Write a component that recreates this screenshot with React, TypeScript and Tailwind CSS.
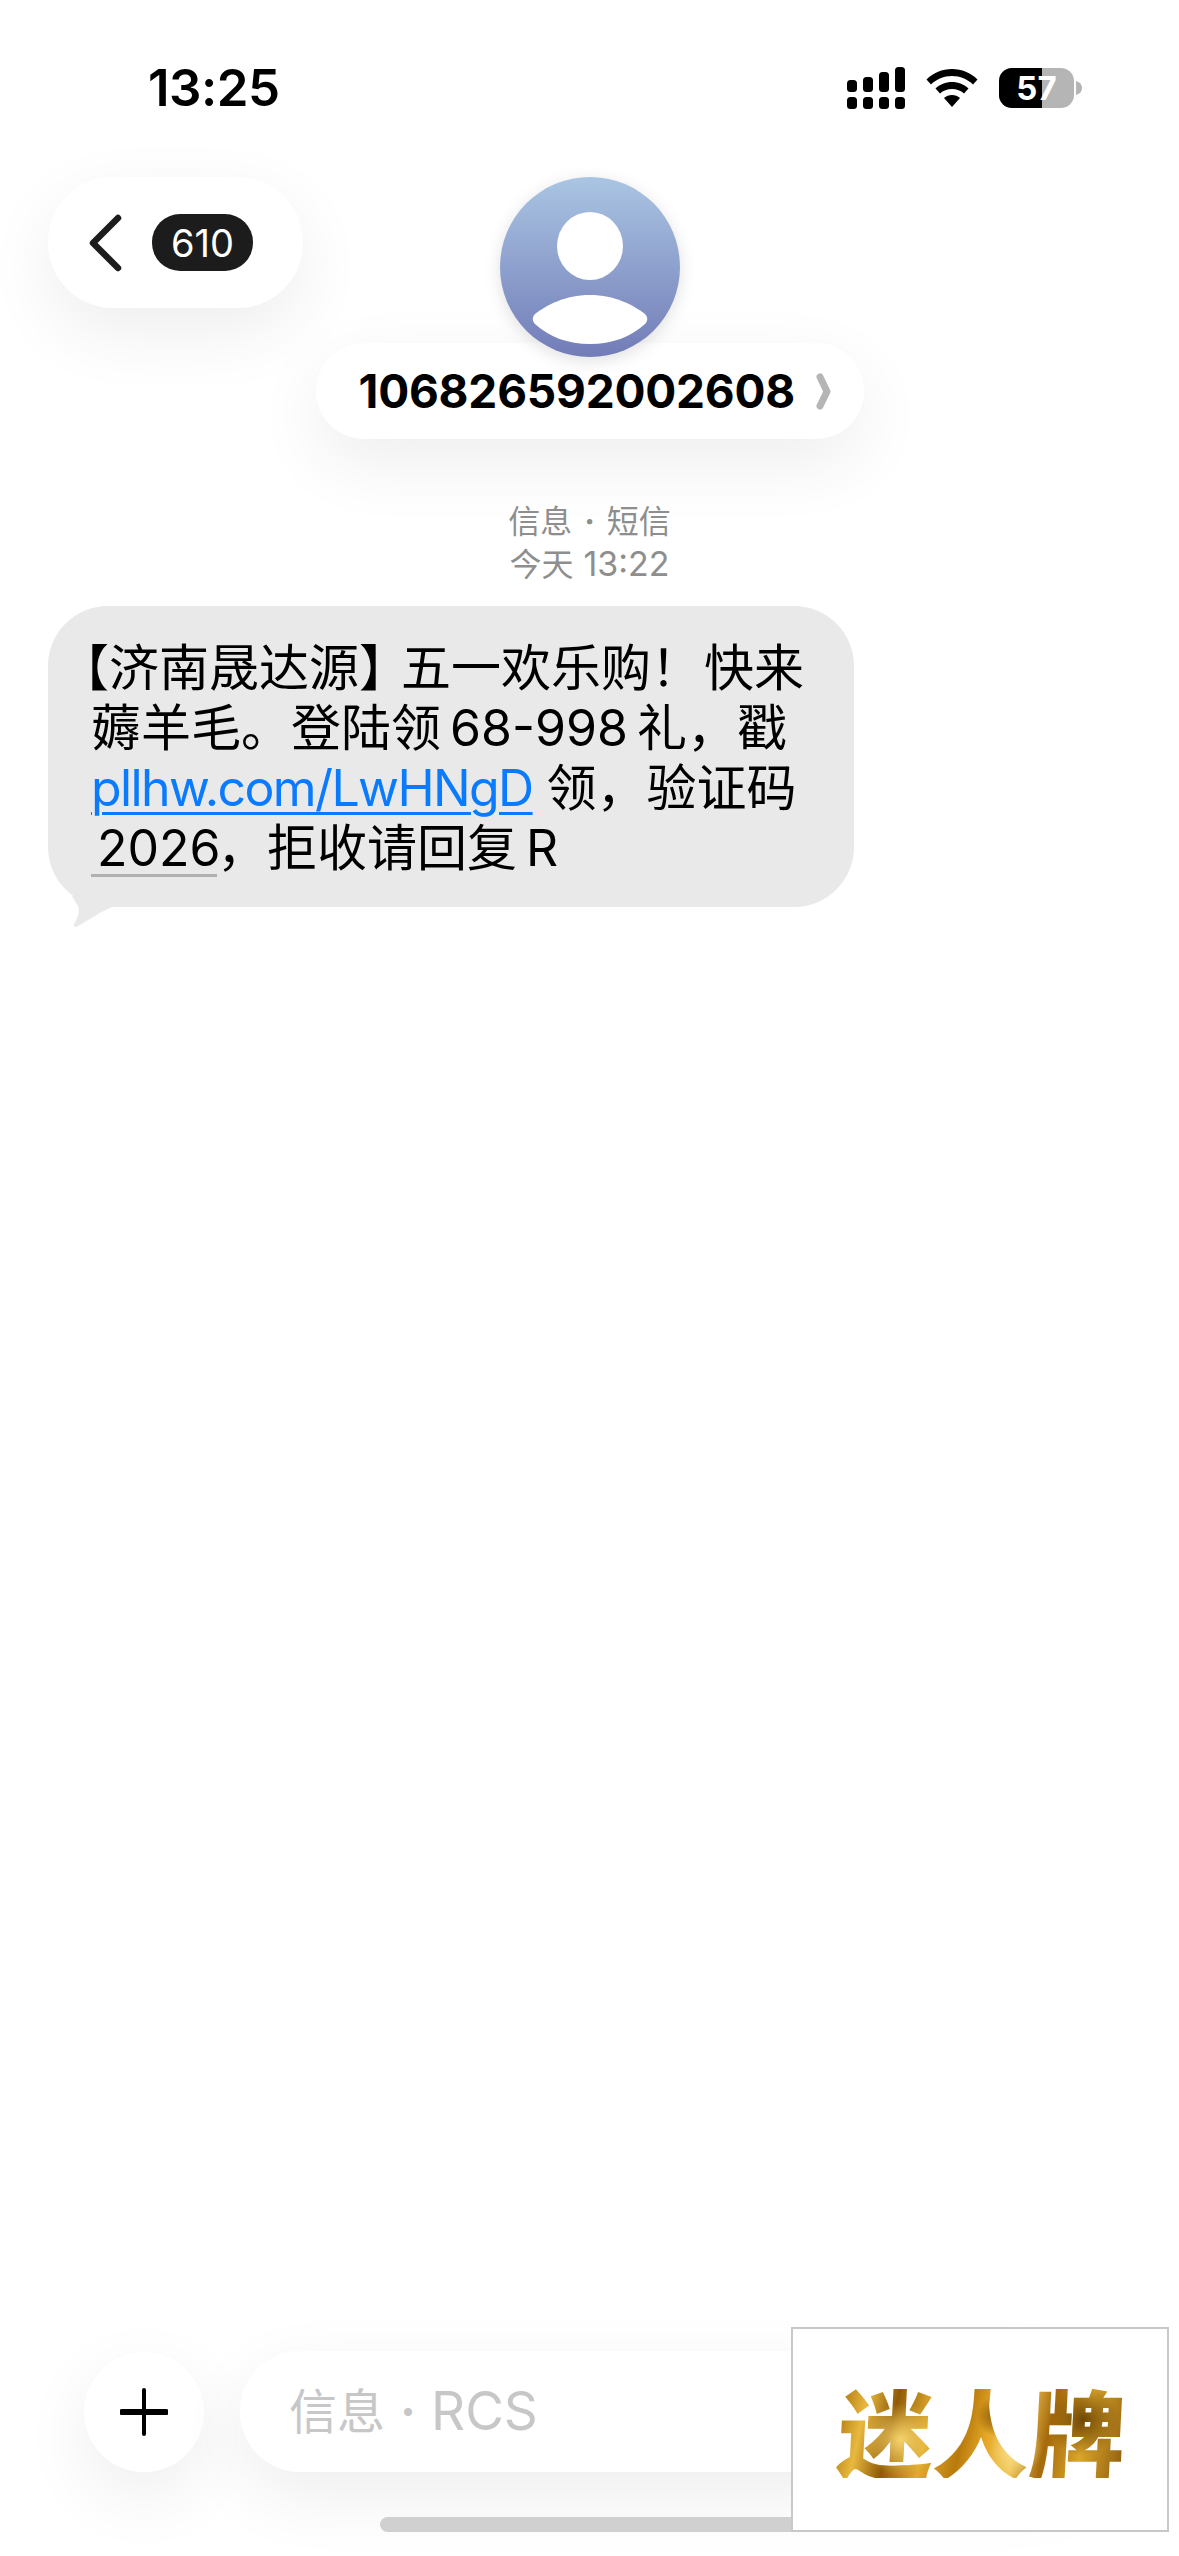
const sans = 'font-["Inter","Noto_Sans_CJK_SC",sans-serif]';

const SignalIcon = () => (
  <svg width="58" height="42" viewBox="0 0 58 42" fill="#000">
    <rect x="0" y="13" width="10" height="12" rx="3.500" />
    <rect x="16" y="10" width="10" height="15" rx="3.500" />
    <rect x="32" y="5" width="10" height="20" rx="3.500" />
    <rect x="48" y="0" width="10" height="25" rx="3.500" />
    <rect x="0" y="30" width="10" height="12" rx="3.500" />
    <rect x="16" y="30" width="10" height="12" rx="3.500" />
    <rect x="32" y="30" width="10" height="12" rx="3.500" />
    <rect x="48" y="30" width="10" height="12" rx="3.500" />
  </svg>
);

const WifiIcon = () => (
  <svg width="52" height="38" viewBox="0 0 52 38" fill="#000">
    <path d="M26 0C16 0 7.500 3.800 0.500 10.500L5 15.500C10.500 10.200 17.800 7 26 7C34.200 7 41.500 10.200 47 15.500L51.500 10.500C44.500 3.800 36 0 26 0Z" />
    <path d="M26 13C19.500 13 13.800 15.500 9.500 19.500L14 24.500C17.200 21.700 21.400 20 26 20C30.600 20 34.800 21.700 38 24.500L42.500 19.500C38.200 15.500 32.500 13 26 13Z" />
    <path d="M26 26C23 26 20.200 27.100 18 29L26 38L34 29C31.800 27.100 29 26 26 26Z" />
  </svg>
);

const Battery = () => (
  <div className="flex items-center gap-[2px]">
    <div className="relative flex h-[40px] w-[75px] overflow-hidden rounded-[13px] bg-[#b5b5b5]">
      <div className="h-full w-[43px] bg-black" />
      <span className="absolute inset-0 flex items-center justify-center text-[33px] leading-none font-bold text-white">57</span>
    </div>
    <svg width="6" height="14" viewBox="0 0 6 14" fill="#b5b5b5">
      <path d="M0 0C3.500 1 6 3.500 6 7C6 10.500 3.500 13 0 14Z" />
    </svg>
  </div>
);

const Avatar = () => (
  <svg width="180" height="180" viewBox="0 0 180 180" className="relative z-10 drop-shadow-[0_4px_8px_rgba(0,0,0,0.12)]">
    <defs>
      <linearGradient id="avatarFill" x1="0" y1="0" x2="0" y2="1">
        <stop offset="0" stopColor="#aac5e3" />
        <stop offset="1" stopColor="#727cb7" />
      </linearGradient>
    </defs>
    <circle cx="90" cy="90" r="90" fill="url(#avatarFill)" />
    <ellipse cx="90" cy="69" rx="33" ry="34" fill="#fff" />
    <path d="M90 118C65 118 47 128 35 137C32 140 32 144 35 147C49 160 68 167 90 167C112 167 131 160 145 147C148 144 148 140 145 137C133 128 115 118 90 118Z" fill="#fff" />
  </svg>
);

export default function App() {
  return (
    <div className={`flex h-[2556px] w-[1179px] flex-col overflow-hidden bg-white text-black ${sans}`}>
      {/* status bar */}
      <div className="flex h-[177px] shrink-0 items-start justify-between pt-[59px] pr-[97px] pl-[148px]">
        <span className="text-[51px] leading-[58px] font-semibold tracking-[-0.5px]">13:25</span>
        <div className="flex items-center gap-[21px] pt-[8px]">
          <SignalIcon />
          <WifiIcon />
          <Battery />
        </div>
      </div>

      {/* header */}
      <div className="grid shrink-0 grid-cols-[1fr_548px_1fr]">
        <div className="pl-[48px]">
          <div className="flex h-[131px] w-[255px] items-center gap-[30px] rounded-[65px] bg-white pl-[41px] shadow-[0_24px_70px_rgba(0,0,0,0.07)]">
            <svg width="33" height="58" viewBox="0 0 33 58" fill="none" stroke="#1c1c1c" strokeWidth="6.500" strokeLinecap="round" strokeLinejoin="round">
              <path d="M29 4L4 29L29 54" />
            </svg>
            <div className="flex h-[57px] w-[101px] items-center justify-center rounded-[28px] bg-[#1c1c1c] text-[38px] leading-none text-white">610</div>
          </div>
        </div>
        <div className="flex flex-col items-center">
          <Avatar />
          <div className="-mt-[14px] flex h-[96px] w-full items-center justify-between rounded-[48px] bg-white pr-[33px] pl-[43px] shadow-[0_24px_70px_rgba(0,0,0,0.07)]">
            <span className="text-[46px] leading-none font-bold tracking-[-0.2px]">106826592002608</span>
            <svg width="15" height="37" viewBox="0 0 15 37" fill="none" stroke="#b5b5b5" strokeWidth="7" strokeLinecap="round" strokeLinejoin="round">
              <path d="M4 4L11 18.500L4 33" />
            </svg>
          </div>
        </div>
      </div>

      {/* message */}
      <div className="mt-[62px] text-center text-[32px] leading-[42px] text-[#8e8e8e]">
        <div>
          信息<span className="mx-[12px] font-bold">·</span>短信
        </div>
        <div>
          今天<span className="ml-[10px] text-[34px]">13:22</span>
        </div>
      </div>

      <div className="relative mt-[20px] ml-[48px] w-[806px] rounded-[60px] bg-[#e9e9e9] pt-[32px] pr-[20px] pb-[29px] pl-[43px] text-[50px] leading-[60px] whitespace-nowrap text-black">
        <div>
          <span className="-ml-[32px]">【</span>济南晟达源<span className="tracking-[-8px]">】</span>五一欢乐购<span className="mr-[3px]">！</span>快来
        </div>
        <div>
          薅羊毛。登陆领<span className="mx-[9px]">68-998</span>礼，戳
        </div>
        <div>
          <span className="tracking-[-1.6px] text-[#0a7aff] underline decoration-[3px] underline-offset-[6px]">pllhw.com/LwHNgD</span>
          <span className="ml-[14px]">领，验证码</span>
        </div>
        <div>
          <span className="inline-block w-[126px] border-b-[3px] border-[#b0b0b0] pl-[6px] leading-[52px]">2026</span>，拒收请回复<span className="ml-[9px]">R</span>
        </div>
        <svg width="50" height="32" viewBox="0 0 50 32" fill="#e9e9e9" className="absolute -bottom-[21px] left-[24px]">
          <path d="M0 0L6 10C8 16 6 22 2 28C1 31 3 32 6 30C14 26 24 18 40 11L50 0Z" />
        </svg>
      </div>

      <div className="flex-1" />

      {/* composer */}
      <div className="flex shrink-0 items-center gap-[36px] pr-[84px] pl-[84px]">
        <div className="flex h-[120px] w-[120px] shrink-0 items-center justify-center rounded-full bg-white shadow-[0_24px_70px_rgba(0,0,0,0.07)]">
          <svg width="48" height="48" viewBox="0 0 48 48" stroke="#000" strokeLinecap="round">
            <path d="M24 2V46" strokeWidth="4" />
            <path d="M2 24H46" strokeWidth="6" />
          </svg>
        </div>
        <div className="flex h-[121px] flex-1 items-center rounded-[60px] bg-white pl-[49px] text-[48px] leading-none text-[#c7c7c7] shadow-[0_24px_70px_rgba(0,0,0,0.07)]">
          信息<span className="mx-[15px] font-bold">·</span><span className="text-[53px]">RCS</span>
        </div>
      </div>
      <div className="mt-[45px] mb-[24px] ml-[380px] h-[15px] w-[419px] shrink-0 rounded-full bg-[#d0d0d0]" />

      {/* watermark */}
      <div className="fixed top-[2327px] left-[791px] flex h-[205px] w-[378px] items-center justify-center border-2 border-[#c8c8c8] bg-white pl-[3px]">
        <span className="-skew-x-3 bg-[radial-gradient(circle_at_22%_60%,#f6d36b_0%,transparent_16%),radial-gradient(circle_at_55%_35%,#7f4f05_0%,transparent_12%),radial-gradient(circle_at_62%_70%,#fbe08d_0%,transparent_14%),radial-gradient(circle_at_85%_40%,#6f4604_0%,transparent_14%),linear-gradient(100deg,#a86f08_0%,#e8b93f_10%,#8f5a06_20%,#e0ab2e_32%,#b87a0c_44%,#e5a826_52%,#f0c95c_62%,#a5690a_72%,#d9a52c_84%,#8b5a0c_100%)] bg-clip-text font-['Noto_Sans_CJK_SC',sans-serif] text-[96px] leading-none font-black whitespace-nowrap text-transparent">
          迷人牌
        </span>
      </div>
    </div>
  );
}
